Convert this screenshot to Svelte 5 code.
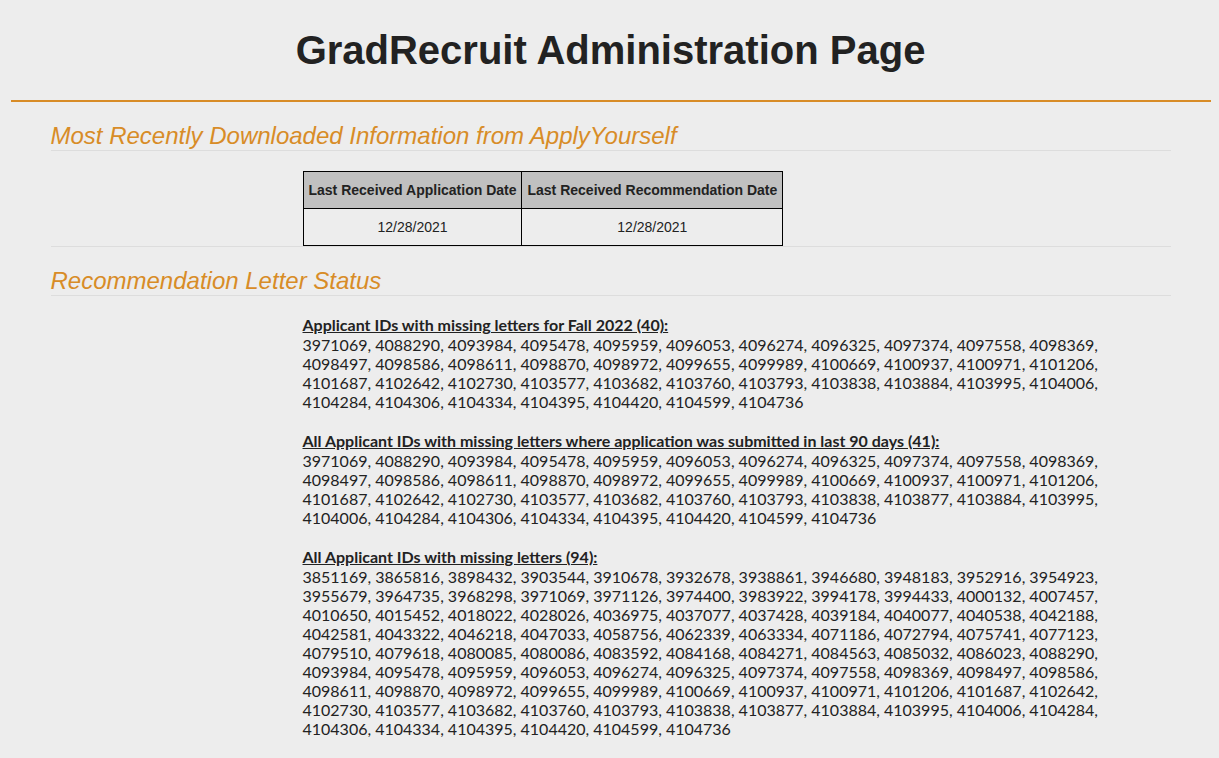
<script>
  const dates = [
    { label: 'Last Received Application Date', value: '12/28/2021' },
    { label: 'Last Received Recommendation Date', value: '12/28/2021' }
  ];

  const groups = [
    {
      title: 'Applicant IDs with missing letters for Fall 2022',
      ids: `3971069 4088290 4093984 4095478 4095959 4096053 4096274 4096325 4097374 4097558 4098369
        4098497 4098586 4098611 4098870 4098972 4099655 4099989 4100669 4100937 4100971 4101206
        4101687 4102642 4102730 4103577 4103682 4103760 4103793 4103838 4103884 4103995 4104006
        4104284 4104306 4104334 4104395 4104420 4104599 4104736`.split(/\s+/)
    },
    {
      title: 'All Applicant IDs with missing letters where application was submitted in last 90 days',
      ids: `3971069 4088290 4093984 4095478 4095959 4096053 4096274 4096325 4097374 4097558 4098369
        4098497 4098586 4098611 4098870 4098972 4099655 4099989 4100669 4100937 4100971 4101206
        4101687 4102642 4102730 4103577 4103682 4103760 4103793 4103838 4103877 4103884 4103995
        4104006 4104284 4104306 4104334 4104395 4104420 4104599 4104736`.split(/\s+/)
    },
    {
      title: 'All Applicant IDs with missing letters',
      ids: `3851169 3865816 3898432 3903544 3910678 3932678 3938861 3946680 3948183 3952916 3954923
        3955679 3964735 3968298 3971069 3971126 3974400 3983922 3994178 3994433 4000132 4007457
        4010650 4015452 4018022 4028026 4036975 4037077 4037428 4039184 4040077 4040538 4042188
        4042581 4043322 4046218 4047033 4058756 4062339 4063334 4071186 4072794 4075741 4077123
        4079510 4079618 4080085 4080086 4083592 4084168 4084271 4084563 4085032 4086023 4088290
        4093984 4095478 4095959 4096053 4096274 4096325 4097374 4097558 4098369 4098497 4098586
        4098611 4098870 4098972 4099655 4099989 4100669 4100937 4100971 4101206 4101687 4102642
        4102730 4103577 4103682 4103760 4103793 4103838 4103877 4103884 4103995 4104006 4104284
        4104306 4104334 4104395 4104420 4104599 4104736`.split(/\s+/)
    }
  ];
</script>

<div class="page">
  <div class="container">
    <header>
      <h1>GradRecruit Administration Page</h1>
    </header>

    <main>
      <section class="downloads">
        <h2>Most Recently Downloaded Information from ApplyYourself</h2>
        <table>
          <thead>
            <tr>
              {#each dates as date}<th scope="col">{date.label}</th>{/each}
            </tr>
          </thead>
          <tbody>
            <tr>
              {#each dates as date}<td>{date.value}</td>{/each}
            </tr>
          </tbody>
        </table>
      </section>

      <section>
        <h2>Recommendation Letter Status</h2>
        <div class="groups">
          {#each groups as group}
            <div>
              <h3>{group.title} ({group.ids.length}):</h3>
              <p>{group.ids.join(', ')}</p>
            </div>
          {/each}
        </div>
      </section>
    </main>
  </div>
</div>

<style>
  :global(body) {
    margin: 0;
    background: #ededed;
  }

  .page {
    padding: 0 0 20px 2px;
    color: #222;
    font-family: Lato, sans-serif;
    font-size: 16px;
    line-height: 19px;
  }

  .container {
    max-width: 1200px;
    margin: 0 auto;
  }

  header {
    padding: 26px 0;
    border-bottom: 2px solid #d88c27;
  }

  h1 {
    margin: 0;
    font: bold 40px/48px "Liberation Sans", Arial, sans-serif;
    text-align: center;
  }

  main {
    padding: 0 40px;
  }

  section {
    padding-top: 20px;
  }

  .downloads {
    border-bottom: 1px solid #ddd;
  }

  h2 {
    margin: 0;
    border-bottom: 1px solid #ddd;
    color: #d88c27;
    font: italic 24px/28px "Liberation Sans", Arial, sans-serif;
  }

  table {
    margin: 20px 0 0 22.5%;
    border-collapse: collapse;
    font: 14px/16px "Liberation Sans", Arial, sans-serif;
    text-align: center;
  }

  th,
  td {
    padding: 10px 5px;
    border: 1px solid #000;
  }

  th {
    background: #c0c0c0;
    font-weight: bold;
  }

  .groups {
    display: grid;
    gap: 20px;
    padding: 19px 5% 0 22.5%;
  }

  h3 {
    margin: 0;
    font-size: 16px;
    font-weight: bold;
    line-height: 20px;
    text-decoration: underline;
  }

  p {
    margin: 0;
  }
</style>
